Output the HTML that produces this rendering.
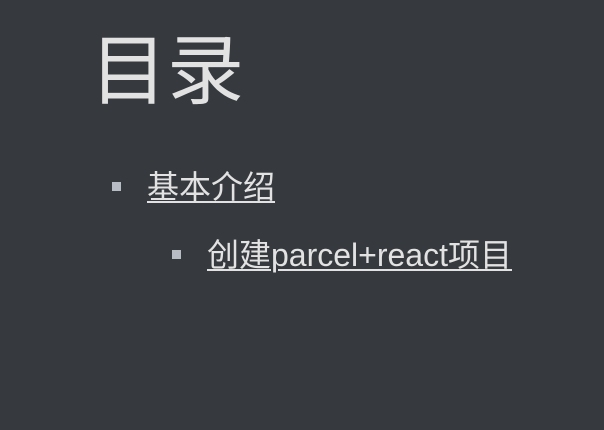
<!DOCTYPE html>
<html><head><meta charset="utf-8"><style>
html,body{margin:0;padding:0;width:604px;height:430px;background:#363a3e;overflow:hidden}
body{font-family:"Liberation Sans","Noto Sans CJK SC",sans-serif;color:#e2e2e2;position:relative}
.t{position:absolute;left:90px;top:22px;font-size:77px;line-height:100px;white-space:nowrap}
.i{position:absolute;font-size:32px;line-height:40px;white-space:nowrap;text-decoration:underline;text-decoration-thickness:2px;text-underline-offset:3px}
.b{position:absolute;width:9px;height:9px;background:#b8bcc4}
</style></head><body>
<div class="t">目录</div>
<div class="b" style="left:112px;top:182px"></div>
<div class="i" style="left:147px;top:167px">基本介绍</div>
<div class="b" style="left:172px;top:250px"></div>
<div class="i" style="left:207px;top:235px">创建parcel+react项目</div>
</body></html>
